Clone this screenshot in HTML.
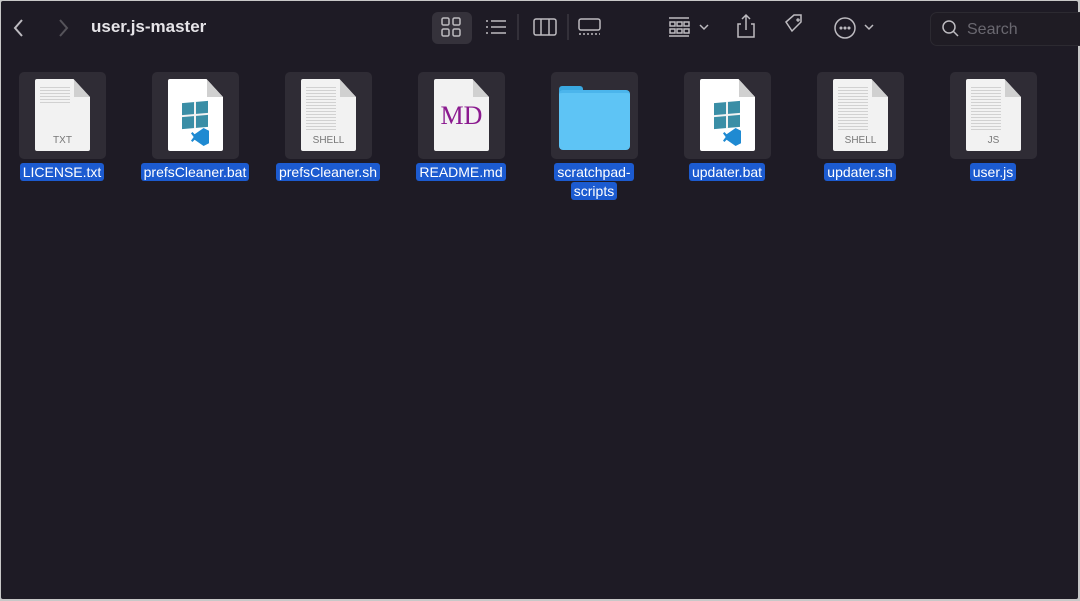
<!DOCTYPE html>
<html><head><style>
body{margin:0;width:1080px;height:601px;overflow:hidden;background:#c8c8c8;font-family:"Liberation Sans",sans-serif}
.win{position:absolute;left:1px;top:1px;width:1077px;height:598px;background:#1e1b25;border-radius:2px}
.t{position:absolute;color:#c9c7cc}
.tile{position:absolute;top:71px;width:87px;height:87px;background:#2f2c35;border-radius:5px}
.page{position:absolute;left:16px;top:7px;width:55px;height:72px;background:#f2f2f2;clip-path:polygon(0 0,70% 0,100% 25%,100% 100%,0 100%);border-radius:2px}
.page:after{content:"";position:absolute;right:0;top:0;width:30%;height:25%;background:#d0d0d0;clip-path:polygon(0 0,100% 100%,0 100%)}
.lbl{position:absolute;top:162px;color:#fff;font-size:14px;text-align:center;width:140px;line-height:19px}
.lbl span{background:#1c5bd0;padding:1px 3px;border-radius:3px;box-decoration-break:clone;-webkit-box-decoration-break:clone}
.ext{position:absolute;bottom:5px;width:100%;text-align:center;font-size:10px;color:#777}
.lines{position:absolute;left:5px;top:6px;width:30px;height:45px;background:repeating-linear-gradient(#f2f2f2 0 2px,#bbb 2px 3px);opacity:.6}
.win10{position:absolute;left:14px;top:23px;width:26px;height:26px;background:linear-gradient(#f2f2f2,#f2f2f2) 12px 0/2px 100% no-repeat,linear-gradient(#f2f2f2,#f2f2f2) 0 12px/100% 2px no-repeat,#3a8ea6;transform:skewY(-5deg)}
.vs{position:absolute;left:39px;top:56px;width:18px;height:18px;background:#1f8ad2;clip-path:polygon(70% 0,100% 15%,100% 85%,70% 100%,20% 65%,8% 78%,0 70%,15% 50%,0 30%,8% 22%,20% 35%)}
</style></head><body><div class="win">
<div class="t" style="left:90px;top:16px;font-size:17px;font-weight:bold;color:#e6e4e8">user.js-master</div>
<div style="position:absolute;left:431px;top:11px;width:40px;height:32px;background:#35323b;border-radius:6px"></div>
<div style="position:absolute;left:929px;top:11px;width:160px;height:32px;border:1px solid #2c2a31;border-radius:7px;background:#1f1c24"></div>
<div class="t" style="left:966px;top:20px;font-size:16px;color:#6a6870">Search</div>
<svg style="position:absolute;left:-1px;top:-1px" width="1080" height="60" fill="none" stroke="#bdbbc0" stroke-width="1.5">
<path d="M22 20l-7 8 7 8" stroke-width="2"/>
<path d="M60 20l7 8-7 8" stroke="#55535a" stroke-width="2"/>
<rect x="442" y="18" width="7" height="7" rx="1.5"/><rect x="453" y="18" width="7" height="7" rx="1.5"/><rect x="442" y="29" width="7" height="7" rx="1.5"/><rect x="453" y="29" width="7" height="7" rx="1.5"/>
<path d="M486 21h2M486 27h2M486 33h2M491 21h15M491 27h15M491 33h15"/>
<line x1="518" y1="14" x2="518" y2="40" stroke="#3a3740"/>
<rect x="534" y="19" width="22" height="16" rx="2"/><path d="M541 19v16M549 19v16"/>
<line x1="568" y1="14" x2="568" y2="40" stroke="#3a3740"/>
<rect x="579" y="19" width="21" height="11" rx="2"/><path d="M579 34h21" stroke-dasharray="2 2"/>
<path d="M669 18h20M669 36h20"/><rect x="670" y="22" width="5" height="4"/><rect x="677" y="22" width="5" height="4"/><rect x="684" y="22" width="5" height="4"/><rect x="670" y="29" width="5" height="4"/><rect x="677" y="29" width="5" height="4"/><rect x="684" y="29" width="5" height="4"/>
<path d="M700 25l4 4 4-4"/>
<path d="M741 24h-3v13h16v-13h-3M746 30v-15M742 19l4-4 4 4"/>
<path d="M786 22l8-7h7v7l-9 9zM798 19a1 1 0 1 0 .1 0"/>
<circle cx="845" cy="28" r="10"/><circle cx="841" cy="28" r=".8"/><circle cx="845" cy="28" r=".8"/><circle cx="849" cy="28" r=".8"/>
<path d="M865 25l4 4 4-4"/>
<circle cx="949" cy="27" r="6"/><path d="M953 31l5 5"/>
</svg>

<div class="tile" style="left:18px"><div class="page"><div class="lines" style="height:20px"></div><div class="ext">TXT</div></div></div>
<div class="tile" style="left:151px"><div class="page" style="background:#fff"><div class="win10"></div></div><div class="vs"></div></div>
<div class="tile" style="left:284px"><div class="page"><div class="lines"></div><div class="ext">SHELL</div></div></div>
<div class="tile" style="left:417px"><div class="page"><div style="position:absolute;top:22px;width:100%;text-align:center;font:26px 'Liberation Serif',serif;color:#8b1a8f">MD</div></div></div>
<div class="tile" style="left:550px"><div style="position:absolute;left:8px;top:14px;width:24px;height:10px;background:#3aa8e0;border-radius:3px 3px 0 0"></div><div style="position:absolute;left:8px;top:18px;width:71px;height:57px;background:#5ec4f5;border-radius:4px;border-top:3px solid #4bb5ec"></div></div>
<div class="tile" style="left:683px"><div class="page" style="background:#fff"><div class="win10"></div></div><div class="vs"></div></div>
<div class="tile" style="left:816px"><div class="page"><div class="lines"></div><div class="ext">SHELL</div></div></div>
<div class="tile" style="left:949px"><div class="page"><div class="lines"></div><div class="ext">JS</div></div></div>

<div class="lbl" style="left:-9px"><span>LICENSE.txt</span></div>
<div class="lbl" style="left:124px"><span>prefsCleaner.bat</span></div>
<div class="lbl" style="left:257px"><span>prefsCleaner.sh</span></div>
<div class="lbl" style="left:390px"><span>README.md</span></div>
<div class="lbl" style="left:523px"><span>scratchpad-<br>scripts</span></div>
<div class="lbl" style="left:656px"><span>updater.bat</span></div>
<div class="lbl" style="left:789px"><span>updater.sh</span></div>
<div class="lbl" style="left:922px"><span>user.js</span></div>
</div></body></html>
